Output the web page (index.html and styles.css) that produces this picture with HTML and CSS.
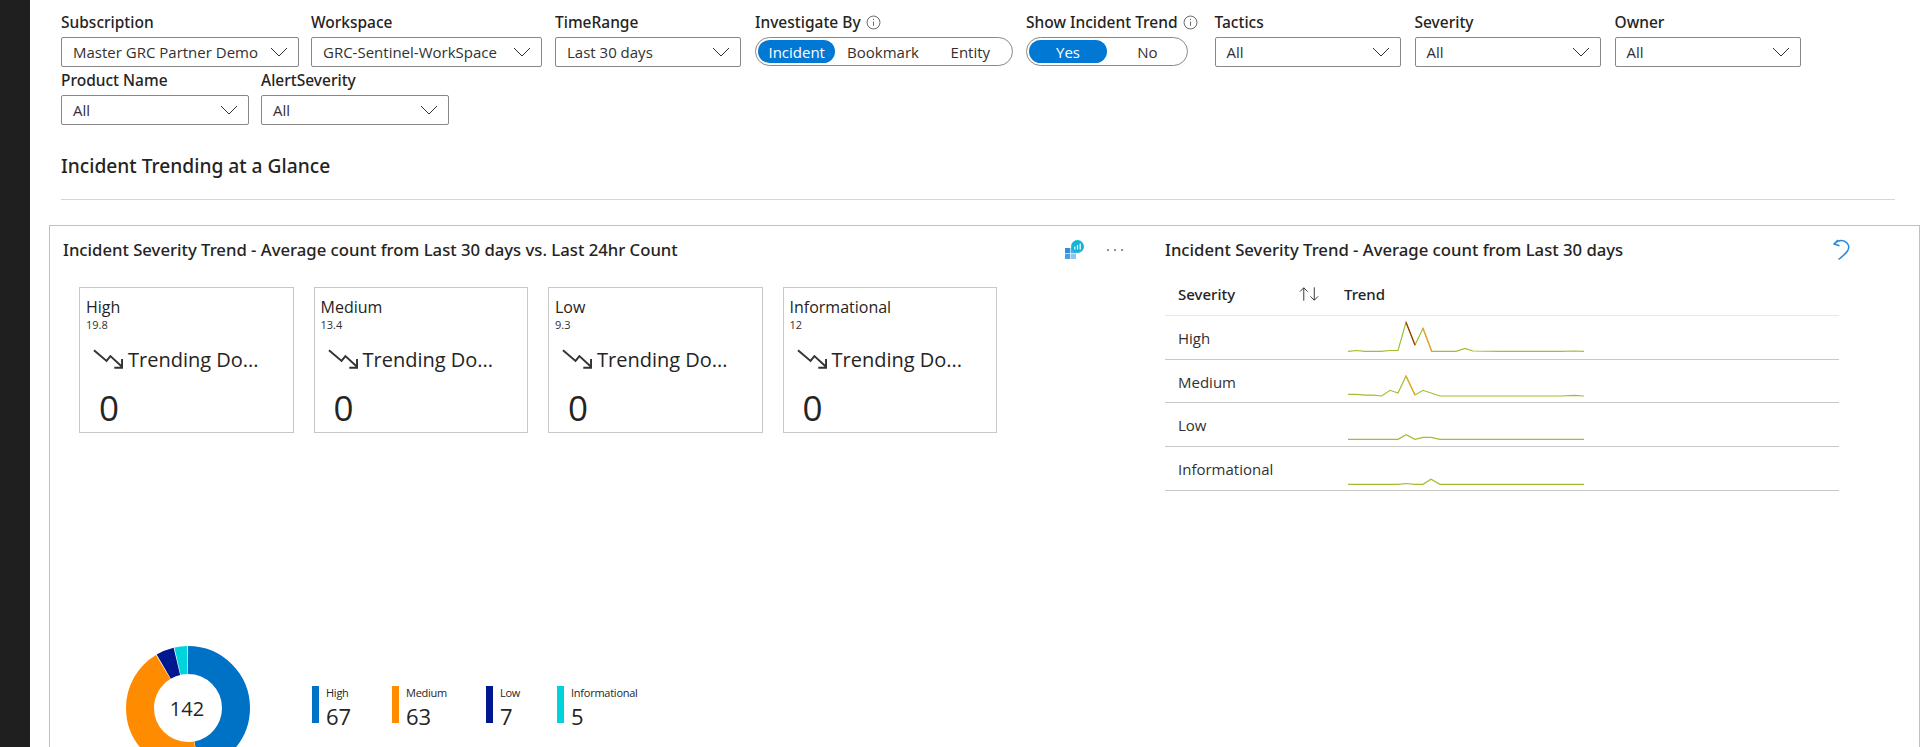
FILE: index.html
```html
<!DOCTYPE html>
<html lang="en">
<head>
<meta charset="utf-8">
<title>Incident Trending at a Glance</title>
<link rel="stylesheet" href="styles.css">
</head>
<body>
<aside class="rail"></aside>
<main class="main">
  <section class="filters">
    <div class="field f-sub"><div class="lbl">Subscription</div><div class="dd"><span>Master GRC Partner Demo</span><svg class="chev" viewBox="0 0 18 10"><path d="M1 1l8 8 8-8"/></svg></div></div>
    <div class="field f-ws"><div class="lbl">Workspace</div><div class="dd"><span>GRC-Sentinel-WorkSpace</span><svg class="chev" viewBox="0 0 18 10"><path d="M1 1l8 8 8-8"/></svg></div></div>
    <div class="field f-tr"><div class="lbl">TimeRange</div><div class="dd"><span>Last 30 days</span><svg class="chev" viewBox="0 0 18 10"><path d="M1 1l8 8 8-8"/></svg></div></div>
    <div class="field f-inv">
      <div class="lbl">Investigate By<svg class="info" viewBox="0 0 16 16"><circle cx="8" cy="8" r="6.9"/><path d="M8 7v4.6M8 4.2v1.2"/></svg></div>
      <div class="pill"><span class="seg seg-on s-inc">Incident</span><span class="seg s-book">Bookmark</span><span class="seg s-ent">Entity</span></div>
    </div>
    <div class="field f-show">
      <div class="lbl">Show Incident Trend<svg class="info" viewBox="0 0 16 16"><circle cx="8" cy="8" r="6.9"/><path d="M8 7v4.6M8 4.2v1.2"/></svg></div>
      <div class="pill pill-show"><span class="seg seg-on s-yes">Yes</span><span class="seg s-no">No</span></div>
    </div>
    <div class="field f-all"><div class="lbl">Tactics</div><div class="dd"><span>All</span><svg class="chev" viewBox="0 0 18 10"><path d="M1 1l8 8 8-8"/></svg></div></div>
    <div class="field f-all"><div class="lbl">Severity</div><div class="dd"><span>All</span><svg class="chev" viewBox="0 0 18 10"><path d="M1 1l8 8 8-8"/></svg></div></div>
    <div class="field f-all"><div class="lbl">Owner</div><div class="dd"><span>All</span><svg class="chev" viewBox="0 0 18 10"><path d="M1 1l8 8 8-8"/></svg></div></div>
    <div class="field f-all f-row2"><div class="lbl">Product Name</div><div class="dd"><span>All</span><svg class="chev" viewBox="0 0 18 10"><path d="M1 1l8 8 8-8"/></svg></div></div>
    <div class="field f-all f-row2"><div class="lbl">AlertSeverity</div><div class="dd"><span>All</span><svg class="chev" viewBox="0 0 18 10"><path d="M1 1l8 8 8-8"/></svg></div></div>
  </section>

  <h1 class="heading">Incident Trending at a Glance</h1>
  <hr class="rule">

  <section class="panel">
    <div class="left">
      <header class="title-row">
        <h2 class="title">Incident Severity Trend - Average count from Last 30 days vs. Last 24hr Count</h2>
        <svg class="wb" viewBox="0 0 19 19">
          <rect x="0" y="8" width="5.200" height="5.200" fill="#2f8fdc"/><rect x="5.800" y="8" width="5.200" height="5.200" fill="#5aa9e6"/>
          <rect x="0" y="13.800" width="5.200" height="5.200" fill="#4a9fe2"/><rect x="5.800" y="13.800" width="5.200" height="5.200" fill="#8cc6f2"/>
          <circle cx="12.500" cy="6.500" r="6.500" fill="#12b5d6"/>
          <path d="M9.800 6.500v3M12.500 5v4.500M15.200 3.500v6" stroke="#fff" stroke-width="1.200" fill="none"/>
        </svg>
        <span class="dots">···</span>
      </header>
      <div class="cards">
        <article class="card"><div class="c-name">High</div><div class="c-avg">19.8</div><div class="c-trend"><svg class="t-ico" viewBox="0 0 31 20"><path d="M1 1l13 11 4-5 12 11M30 10v9h-8"/></svg><span>Trending Do...</span></div><div class="c-num">0</div></article>
        <article class="card"><div class="c-name">Medium</div><div class="c-avg">13.4</div><div class="c-trend"><svg class="t-ico" viewBox="0 0 31 20"><path d="M1 1l13 11 4-5 12 11M30 10v9h-8"/></svg><span>Trending Do...</span></div><div class="c-num">0</div></article>
        <article class="card"><div class="c-name">Low</div><div class="c-avg">9.3</div><div class="c-trend"><svg class="t-ico" viewBox="0 0 31 20"><path d="M1 1l13 11 4-5 12 11M30 10v9h-8"/></svg><span>Trending Do...</span></div><div class="c-num">0</div></article>
        <article class="card"><div class="c-name">Informational</div><div class="c-avg">12</div><div class="c-trend"><svg class="t-ico" viewBox="0 0 31 20"><path d="M1 1l13 11 4-5 12 11M30 10v9h-8"/></svg><span>Trending Do...</span></div><div class="c-num">0</div></article>
      </div>
      <div class="summary">
        <div class="donut">
          <svg viewBox="0 0 124 124" class="donut-svg">
            <g transform="rotate(-90 62 62)" fill="none" stroke-width="28">
              <circle cx="62" cy="62" r="48" pathLength="142" stroke="#0072c6" stroke-dasharray="66.700 75.300"/>
              <circle cx="62" cy="62" r="48" pathLength="142" stroke="#ff8c00" stroke-dasharray="62.700 79.300" stroke-dashoffset="-67"/>
              <circle cx="62" cy="62" r="48" pathLength="142" stroke="#00188f" stroke-dasharray="6.700 135.300" stroke-dashoffset="-130"/>
              <circle cx="62" cy="62" r="48" pathLength="142" stroke="#00d3dc" stroke-dasharray="4.700 137.300" stroke-dashoffset="-137"/>
            </g>
          </svg>
          <span class="donut-total">142</span>
        </div>
        <div class="legend">
          <div class="lg lg-high"><i class="bar bar-high"></i><div><div class="lg-name">High</div><div class="lg-val">67</div></div></div>
          <div class="lg lg-med"><i class="bar bar-med"></i><div><div class="lg-name">Medium</div><div class="lg-val">63</div></div></div>
          <div class="lg lg-low"><i class="bar bar-low"></i><div><div class="lg-name">Low</div><div class="lg-val">7</div></div></div>
          <div class="lg"><i class="bar bar-info"></i><div><div class="lg-name">Informational</div><div class="lg-val">5</div></div></div>
        </div>
      </div>
    </div>

    <div class="right">
      <header class="title-row title-row-r">
        <h2 class="title">Incident Severity Trend - Average count from Last 30 days</h2>
        <svg class="undo" viewBox="0 0 18 22"><path d="M5 1L1 5l5.500 1.700M1 5C4 2 8 .5 11.500 2.200 15.500 4 17 8 14.500 12 12.500 15 9 17.500 5.500 20.500"/></svg>
      </header>
      <div class="tbl">
        <div class="tr th">
          <div class="c1"><span>Severity</span><svg class="sort" viewBox="0 0 22 16"><path d="M5 15V1.500M1 5.500l4-4 4 4M16 1v13.500M12 10.500l4 4 4-4"/></svg></div>
          <div class="c2">Trend</div>
        </div>
        <div class="tr">
          <div class="c1">High</div>
          <svg class="spark" viewBox="1348 317 236 43"><polyline class="g" points="1348,352.300 1356.500,351.500 1365,352.300 1381,352.300 1390,351.500 1398,351.500 1406,323.300 1415,346 1423,329.300 1431.700,352.300 1456,352.300 1465,349.500 1473,352 1500,352.300 1560,352.300 1575,352 1584,352.300"/><polyline class="r" points="1406,323.300 1415,346"/><polyline class="o" points="1423,329.300 1431.700,352.300"/></svg>
        </div>
        <div class="tr">
          <div class="c1">Medium</div>
          <svg class="spark" viewBox="1348 360 236 43"><polyline class="g" points="1348,394.300 1356.500,394.300 1365,395.200 1373,395.200 1381.700,396 1390,390.300 1398,393 1406,376 1415,395 1423,390.300 1431,393 1440,396 1560,396 1575,395.300 1584,396"/><polyline class="o" points="1406,376 1415,395"/></svg>
        </div>
        <div class="tr">
          <div class="c1">Low</div>
          <svg class="spark" viewBox="1348 404 236 43"><polyline class="g" points="1348,440.300 1398,440.300 1406,435.700 1415,440.300 1423,438.300 1431,438.300 1440,440.300 1584,440.300"/></svg>
        </div>
        <div class="tr">
          <div class="c1">Informational</div>
          <svg class="spark" viewBox="1348 447 236 43"><polyline class="g" points="1348,484.300 1398,484.300 1406,483.500 1415,484.300 1423,484.300 1431,479.300 1440,484.300 1584,484.300"/></svg>
        </div>
      </div>
    </div>
  </section>
</main>
</body>
</html>
```
FILE: styles.css
```css
* { box-sizing: border-box; }
html, body { margin: 0; height: 747px; overflow: hidden; background: #fff; }
body { display: flex; font-family: "Open Sans", "Noto Sans", sans-serif; color: #323130; }
.rail { width: 30px; flex: none; background: #1f1f1f; }
.main { flex: 1; min-width: 0; padding: 13px 26px 0 31px; }

.filters { display: flex; flex-wrap: wrap; row-gap: 4px; }
.field { flex: none; }
.lbl { display: flex; align-items: center; height: 18px; margin-bottom: 6px; font-family: "Noto Sans", "Open Sans", sans-serif; font-size: 15.500px; font-weight: 500; white-space: nowrap; color: #252423; }
.f-sub { width: 238px; margin-right: 12px; }
.f-ws { width: 231px; margin-right: 13px; }
.f-tr { width: 186px; margin-right: 14px; }
.f-inv { width: 258px; margin-right: 13px; }
.f-show { width: 162px; margin-right: 26.500px; }
.f-all { width: 186px; margin-right: 14px; }
.f-row2 { width: 188px; margin-right: 12px; }
.f-show .lbl { width: 180px; }
.info { width: 15px; height: 15px; margin-left: 5px; flex: none; fill: none; stroke: #605e5c; stroke-width: 1; }
.dd { display: flex; align-items: center; justify-content: space-between; height: 30px; padding: 0 10px 0 11px; border: 1px solid #8a8886; border-radius: 2px; font-size: 15px; white-space: nowrap; }
.chev { width: 18px; height: 10px; flex: none; fill: none; stroke: #323130; stroke-width: 1; }
.pill { display: flex; align-items: stretch; height: 29px; padding: 2px; border: 1px solid #8a8886; border-radius: 15px; font-size: 15px; }
.seg { display: flex; align-items: center; justify-content: center; border-radius: 12px; }
.seg-on { background: #0078d4; color: #fff; }
.s-inc { width: 78px; }
.s-book { width: 96px; }
.s-ent { width: 80px; }
.s-yes { width: 78px; }
.s-no { width: 78px; padding-left: 3px; }

.heading { margin: 29px 0 0; height: 24px; line-height: 24px; font-family: "Noto Sans", "Open Sans", sans-serif; font-size: 19.200px; font-weight: 500; color: #252423; }
.rule { margin: 21px 0 0; height: 1px; border: 0; background: #d6d6d6; }

.panel { display: flex; margin: 25px -25px 0 -12px; height: 600px; border: 1px solid #c0c0c0; }
.left { width: 1115px; flex: none; }
.right { flex: 1; min-width: 0; }
.title-row { display: flex; align-items: center; height: 47px; padding-left: 13px; }
.title { margin: 0; font-family: "Noto Sans", "Open Sans", sans-serif; font-size: 16.700px; font-weight: 500; line-height: 20px; color: #252423; white-space: nowrap; }
.wb { width: 19px; height: 19px; margin-left: auto; }
.dots { width: 18px; margin: 0 41px 0 22px; font-size: 15px; font-weight: 400; letter-spacing: 3px; color: #605e5c; line-height: 1; text-align: left; white-space: nowrap; }

.cards { display: flex; gap: 20px; margin: 14px 0 0 29px; }
.card { width: 214.500px; height: 146px; border: 1px solid #c8c8c8; padding: 0 0 0 6px; }
.c-name { margin-top: 8px; height: 22px; line-height: 22px; font-size: 16px; color: #252423; }
.c-avg { height: 14px; line-height: 14px; font-size: 11px; margin-top: 0; }
.c-trend { display: flex; align-items: center; margin: 15px 0 0 7px; height: 24px; font-size: 20px; color: #252423; white-space: nowrap; }
.t-ico { width: 30px; height: 20px; flex: none; margin-right: 5px; fill: none; stroke: #333; stroke-width: 2; }
.c-num { margin: 17px 0 0 13px; height: 40px; line-height: 40px; font-size: 35px; color: #252423; }

.summary { display: flex; align-items: flex-start; margin: 213px 0 0 76px; }
.donut { position: relative; width: 124px; height: 124px; flex: none; }
.donut-svg { display: block; width: 124px; height: 124px; }
.donut-total { position: absolute; inset: 0 2px 0 0; display: flex; align-items: center; justify-content: center; font-size: 20px; color: #252423; }
.legend { display: flex; margin: 40px 0 0 62px; }
.lg { display: flex; }
.lg-high { width: 80px; }
.lg-med { width: 94px; }
.lg-low { width: 71px; }
.bar { display: block; width: 7px; height: 37px; margin-right: 7px; flex: none; }
.bar-high { background: #0072c6; }
.bar-med { background: #ff8c00; }
.bar-low { background: #00188f; }
.bar-info { background: #00d3dc; }
.lg-name { height: 13px; line-height: 13px; font-size: 11px; letter-spacing: -0.25px; color: #252423; }
.lg-val { height: 28px; line-height: 28px; font-size: 22px; color: #252423; margin-top: 3px; }

.title-row-r { padding-left: 0; }
.undo { width: 18px; height: 22px; margin-left: auto; margin-right: 68px; fill: none; stroke: #2b88d8; stroke-width: 1.500; }
.tbl { width: 674px; }
.tr { display: grid; grid-template-columns: 183px 1fr; align-items: center; height: 43.700px; border-bottom: 1px solid #c8c8c8; font-size: 15px; }
.th { grid-template-columns: 179px 1fr; height: 43px; border-bottom-color: #e8e8e8; font-family: "Noto Sans", "Open Sans", sans-serif; font-weight: 500; color: #252423; }
.c1 { padding-left: 13px; padding-top: 1px; }
.th .c1 { display: flex; justify-content: space-between; align-items: center; padding: 0 24px 0 13px; }
.sort { width: 21px; height: 16px; fill: none; stroke: #323130; stroke-width: 1; }
.spark { display: block; width: 236px; height: 43px; fill: none; stroke-width: 1.200; }
.g { stroke: #9fbf2f; }
.r { stroke: #a33000; }
.o { stroke: #f0a030; }
```
